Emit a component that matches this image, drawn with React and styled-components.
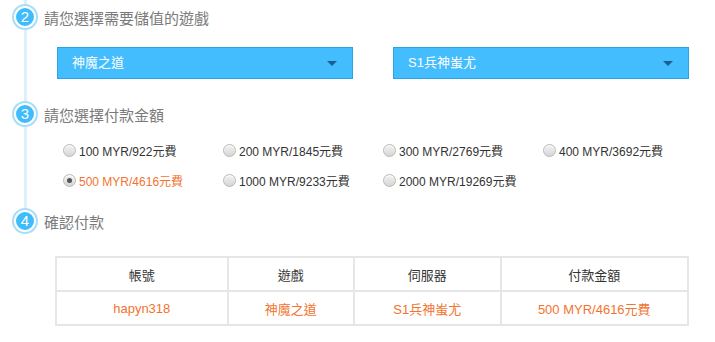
import styled, { createGlobalStyle } from "styled-components";

const GlobalStyle = createGlobalStyle`
    body {
        margin: 0;
        background: #fff;
        font-family: "Liberation Sans", "Noto Sans CJK TC", Arial, sans-serif;
    }
`;

const Page = styled.div`
    position: relative;
    width: 715px;
    height: 342px;
    padding: 4px 0 0 12px;
    box-sizing: border-box;

    &::before {
        content: "";
        position: absolute;
        left: 24px;
        top: 0;
        width: 3px;
        height: 215px;
        background: #ddf1fc;
    }
`;

const StepHead = styled.div`
    position: relative;
    display: flex;
    align-items: center;
    gap: 6px;
    height: 26px;
    margin-top: ${(p) => p.$top || 0}px;
`;

const StepNum = styled.span`
    width: 18px;
    height: 18px;
    border-radius: 50%;
    border: 2px solid #fff;
    box-shadow: 0 0 0 2px #a8ddf9;
    margin: 2px;
    background: #3fbcfd;
    color: #fff;
    font-size: 15px;
    line-height: 18px;
    text-align: center;
`;

const StepTitle = styled.span`
    font-family: "Noto Sans CJK TC", sans-serif;
    font-size: 15px;
    color: #7a7a7a;
`;

const SelectRow = styled.div`
    display: flex;
    gap: 40px;
    margin: 17px 0 0 45px;
`;

const Select = styled.div`
    position: relative;
    width: 296px;
    height: 32px;
    box-sizing: border-box;
    border: 1px solid #2ba3e7;
    background: #43bdfd;
    color: #fff;
    font-family: "Liberation Sans", "Noto Sans CJK TC", sans-serif;
    font-size: 13px;
    line-height: 30px;
    padding-left: 14px;

    &::after {
        content: "";
        position: absolute;
        right: 15px;
        top: 13px;
        border-left: 5px solid transparent;
        border-right: 5px solid transparent;
        border-top: 5px solid #1d5f8f;
    }
`;

const RadioGrid = styled.div`
    display: grid;
    grid-template-columns: repeat(4, 160px);
    grid-auto-rows: 30px;
    margin: 8px 0 0 51px;
`;

const Option = styled.label`
    display: flex;
    align-items: center;
    gap: 3px;
    font-family: "Liberation Sans", "Noto Sans CJK TC", sans-serif;
    font-size: 12px;
    color: ${(p) => (p.$active ? "#f37330" : "#333")};
`;

const Radio = styled.span`
    position: relative;
    width: 11px;
    height: 11px;
    border-radius: 50%;
    border: 1px solid #b8b8b8;
    background: linear-gradient(#f2f2f2, #d6d6d6);
    box-shadow: inset 0 1px 1px #fff;

    &::after {
        content: "";
        display: ${(p) => (p.$checked ? "block" : "none")};
        position: absolute;
        left: 3px;
        top: 3px;
        width: 5px;
        height: 5px;
        border-radius: 50%;
        background: #555;
    }
`;

const Table = styled.table`
    margin: 22px 0 0 43px;
    width: 634px;
    border-collapse: collapse;
    font-family: "Liberation Sans", "Noto Sans CJK TC", sans-serif;
    font-size: 13px;
`;

const Cell = styled.td`
    border: 2px solid #e6e6e6;
    height: 32px;
    padding: 0;
    text-align: center;
    color: ${(p) => (p.$head ? "#333" : "#f37330")};
`;

const options = [
    "100 MYR/922元費",
    "200 MYR/1845元費",
    "300 MYR/2769元費",
    "400 MYR/3692元費",
    "500 MYR/4616元費",
    "1000 MYR/9233元費",
    "2000 MYR/19269元費",
];

const cols = [
    ["帳號", "hapyn318", 172],
    ["遊戲", "神魔之道", 127],
    ["伺服器", "S1兵神蚩尤", 147],
    ["付款金額", "500 MYR/4616元費", 188],
];

function App() {
    return (
        <Page>
            <GlobalStyle />
            <StepHead>
                <StepNum>2</StepNum>
                <StepTitle>請您選擇需要儲值的遊戲</StepTitle>
            </StepHead>
            <SelectRow>
                <Select>神魔之道</Select>
                <Select>S1兵神蚩尤</Select>
            </SelectRow>

            <StepHead $top={22}>
                <StepNum>3</StepNum>
                <StepTitle>請您選擇付款金額</StepTitle>
            </StepHead>
            <RadioGrid>
                {options.map((o, i) => (
                    <Option key={o} $active={i === 4}>
                        <Radio $checked={i === 4} />
                        {o}
                    </Option>
                ))}
            </RadioGrid>

            <StepHead $top={13}>
                <StepNum>4</StepNum>
                <StepTitle>確認付款</StepTitle>
            </StepHead>
            <Table>
                <colgroup>
                    {cols.map((c) => (
                        <col key={c[0]} style={{ width: c[2] }} />
                    ))}
                </colgroup>
                <tbody>
                    <tr>
                        {cols.map((c) => (
                            <Cell key={c[0]} $head>{c[0]}</Cell>
                        ))}
                    </tr>
                    <tr>
                        {cols.map((c) => (
                            <Cell key={c[0]}>{c[1]}</Cell>
                        ))}
                    </tr>
                </tbody>
            </Table>
        </Page>
    );
}

export default App;
